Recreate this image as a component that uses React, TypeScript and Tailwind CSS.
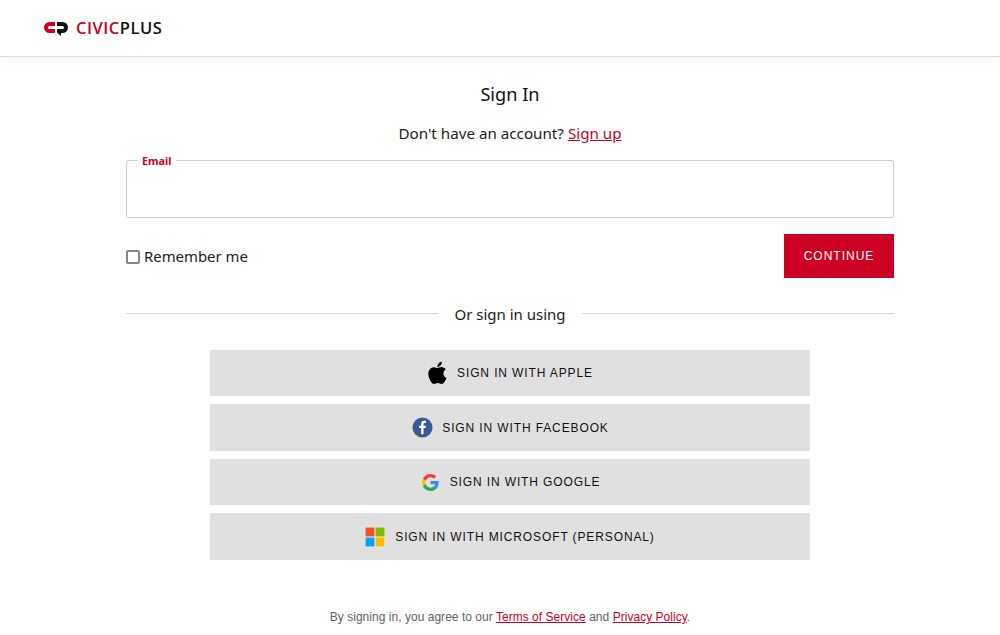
const providers = [
  { label: 'Sign in with Apple', icon: <AppleIcon /> },
  { label: 'Sign in with Facebook', icon: <FacebookIcon /> },
  { label: 'Sign in with Google', icon: <GoogleIcon /> },
  { label: 'Sign in with Microsoft (Personal)', icon: <MicrosoftIcon /> },
];

function AppleIcon() {
  return (
    <svg viewBox="0 0 24 24" className="w-[26px] h-[26px] -ml-[2px] -mr-[4px]" fill="#000">
      <path d="M17.05 12.54c-.03-2.6 2.12-3.85 2.22-3.91-1.21-1.77-3.09-2.01-3.76-2.04-1.6-.16-3.12.94-3.93.94-.81 0-2.06-.92-3.39-.89-1.74.03-3.35 1.01-4.25 2.57-1.81 3.14-.46 7.8 1.3 10.35.86 1.25 1.89 2.65 3.24 2.6 1.3-.05 1.79-.84 3.36-.84 1.57 0 2.01.84 3.39.81 1.4-.02 2.28-1.27 3.14-2.53.99-1.45 1.4-2.85 1.42-2.92-.03-.01-2.72-1.04-2.74-4.14zM14.47 4.9c.72-.87 1.2-2.08 1.07-3.28-1.03.04-2.28.69-3.02 1.55-.66.77-1.24 2-1.09 3.18 1.15.09 2.32-.58 3.04-1.45z" />
    </svg>
  );
}

function FacebookIcon() {
  return (
    <svg viewBox="0 0 22 22" className="w-[21px] h-[21px] ml-[1px] -mr-[1px]">
      <circle cx="11" cy="11" r="10.5" fill="#3b5998" />
      <path fill="#fff" d="M12.1 18v-6.4h2.1l.35-2.5H12.1V7.6c0-.72.2-1.2 1.24-1.2h1.3V4.15c-.23-.03-1-.1-1.9-.1-1.88 0-3.16 1.15-3.16 3.25V9.1H7.5v2.5h2.08V18z" />
    </svg>
  );
}

function GoogleIcon() {
  return (
    <svg viewBox="0 0 48 48" className="w-[17px] h-[17px] ml-[2px] mr-[1px]">
      <path fill="#EA4335" d="M24 9.5c3.54 0 6.71 1.22 9.21 3.6l6.85-6.85C35.9 2.38 30.47 0 24 0 14.62 0 6.51 5.38 2.56 13.22l7.98 6.19C12.43 13.72 17.74 9.5 24 9.5z" />
      <path fill="#4285F4" d="M46.98 24.55c0-1.57-.15-3.09-.38-4.55H24v9.02h12.94c-.58 2.96-2.26 5.48-4.78 7.18l7.73 6c4.51-4.18 7.09-10.36 7.09-17.65z" />
      <path fill="#FBBC05" d="M10.53 28.59c-.48-1.45-.76-2.99-.76-4.59s.27-3.14.76-4.59l-7.98-6.19C.92 16.46 0 20.12 0 24c0 3.88.92 7.54 2.56 10.78l7.97-6.19z" />
      <path fill="#34A853" d="M24 48c6.48 0 11.93-2.13 15.89-5.81l-7.73-6c-2.15 1.45-4.92 2.3-8.16 2.3-6.26 0-11.57-4.22-13.47-9.91l-7.98 6.19C6.51 42.62 14.62 48 24 48z" />
    </svg>
  );
}

function MicrosoftIcon() {
  return (
    <svg viewBox="0 0 20 20" className="w-5 h-5">
      <rect width="20" height="20" fill="#f3f3f3" />
      <rect x="0.5" y="0.5" width="9" height="9" fill="#f25022" />
      <rect x="10.5" y="0.5" width="9" height="9" fill="#7fba00" />
      <rect x="0.5" y="10.5" width="9" height="9" fill="#00a4ef" />
      <rect x="10.5" y="10.5" width="9" height="9" fill="#ffb900" />
    </svg>
  );
}

function Logo() {
  return (
    <div className="flex items-center gap-[8px]">
      <svg viewBox="0 0 24 14" className="w-[24px] h-[14px] mt-[2px]">
        <path fill="#cc0022" d="M11 0H5.5a5.5 5.5 0 0 0 0 11H11V7H5.5a1.5 1.5 0 0 1 0-3H11z" />
        <path fill="#111" d="M13 0h5.5a5.5 5.5 0 0 1 0 11H17v3l-4-3.5V7h5.5a1.5 1.5 0 0 0 0-3H13z" />
      </svg>
      <span className="font-['Open_Sans',sans-serif] text-[16.5px] font-semibold leading-none tracking-[0.5px]">
        <span className="text-[#cc0022]">CIVIC</span>
        <span className="text-[#111]">PLUS</span>
      </span>
    </div>
  );
}

export default function App() {
  return (
    <div className="min-h-[635px] bg-white font-['Noto_Sans',sans-serif] text-[#1c1c1c]">
      <header className="h-[57px] flex items-center pl-[44px] border-b border-[#dcdce2] shadow-[0_2px_10px_rgba(0,0,0,0.05)]">
        <Logo />
      </header>

      <main className="w-[768px] ml-[126px] flex flex-col">
        <h1 className="mt-[23px] text-center text-[18.2px] leading-[28px] text-[#111]">Sign In</h1>
        <p className="mt-[13px] text-center text-[15.2px] leading-[24px]">
          Don't have an account?{' '}
          <a className="text-[#cc0022] underline">Sign up</a>
        </p>

        <fieldset className="mt-[9px] h-[64px] border border-[#d0d0dc] rounded-[2px] pl-[11px]">
          <legend className="px-[4px] text-[10.8px] leading-[13px] font-bold text-[#cc0022]">Email</legend>
        </fieldset>

        <div className="mt-[16px] flex items-center justify-between">
          <label className="flex items-center gap-[4px] text-[14.9px] leading-[24px]">
            <span className="w-[14px] h-[14px] mt-[1px] border-2 border-[#85858f] rounded-[2px]" />
            Remember me
          </label>
          <button className="w-[110px] h-[44px] bg-[#cc0022] text-white font-['Liberation_Sans',sans-serif] text-[12px] tracking-[1px] uppercase">
            Continue
          </button>
        </div>

        <div className="mt-[24px] flex items-center gap-[16px]">
          <div className="flex-1 h-px bg-[#d6d6dc] mb-[2px]" />
          <span className="text-[15px] leading-[24px]">Or sign in using</span>
          <div className="flex-1 h-px bg-[#d6d6dc] mb-[2px]" />
        </div>

        <div className="mt-[23.9px] w-[600px] mx-auto flex flex-col gap-[8px]">
          {providers.map((p) => (
            <button
              key={p.label}
              className="h-[46.5px] bg-[#e0e0e0] flex items-center justify-center gap-[10px] font-['Liberation_Sans',sans-serif] text-[12px] tracking-[0.88px] uppercase text-[#111]"
            >
              {p.icon}
              <span>{p.label}</span>
            </button>
          ))}
        </div>

        <p className="mt-[48.1px] text-center font-['Liberation_Sans',sans-serif] text-[12px] tracking-[0.03px] leading-[18px] text-[#5f5f5f]">
          By signing in, you agree to our{' '}
          <a className="text-[#cc0022] underline">Terms of Service</a> and{' '}
          <a className="text-[#cc0022] underline">Privacy Policy</a>.
        </p>
      </main>
    </div>
  );
}
